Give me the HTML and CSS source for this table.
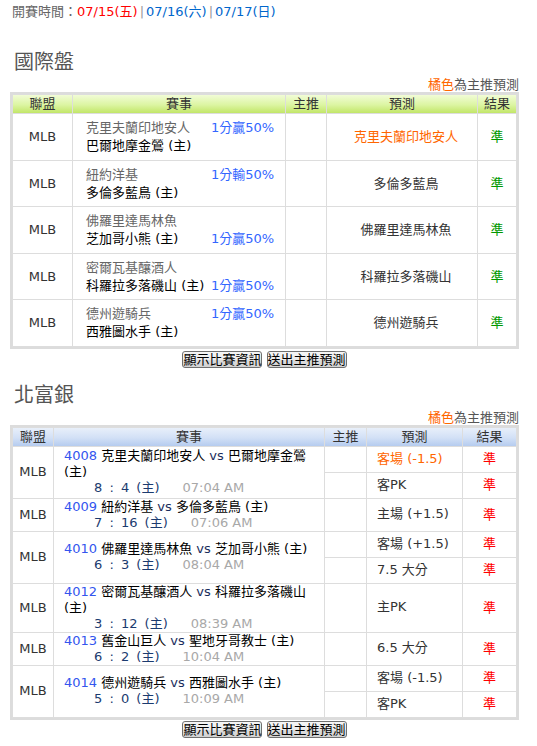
FILE: index.html
```html
<!DOCTYPE html>
<html lang="zh-Hant">
<head>
<meta charset="utf-8">
<title>開賽時間</title>
<link rel="stylesheet" href="styles.css">
</head>
<body>
<div class="page">
  <div class="dates">開賽時間：<span class="cur">07/15(五)</span><span class="sep">|</span><span class="day">07/16(六)</span><span class="sep">|</span><span class="day">07/17(日)</span></div>

  <h2 class="title first">國際盤</h2>
  <div class="note"><span class="orange">橘色</span>為主推預測</div>
  <div class="box">
    <table class="grid g1">
      <thead>
        <tr><th class="w1">聯盟</th><th class="w2">賽事</th><th class="w3">主推</th><th class="w4">預測</th><th class="w5">結果</th></tr>
      </thead>
      <tbody>
        <tr>
          <td class="lg">MLB</td>
          <td class="match"><div class="mt"><span class="away">克里夫蘭印地安人</span><span class="odds">1分贏50%</span><span class="home">巴爾地摩金鶯 (主)</span><span></span></div></td>
          <td></td>
          <td class="pred hot">克里夫蘭印地安人</td>
          <td class="res ok">準</td>
        </tr>
        <tr>
          <td class="lg">MLB</td>
          <td class="match"><div class="mt"><span class="away">紐約洋基</span><span class="odds">1分輸50%</span><span class="home">多倫多藍鳥 (主)</span><span></span></div></td>
          <td></td>
          <td class="pred">多倫多藍鳥</td>
          <td class="res ok">準</td>
        </tr>
        <tr>
          <td class="lg">MLB</td>
          <td class="match"><div class="mt"><span class="away">佛羅里達馬林魚</span><span></span><span class="home">芝加哥小熊 (主)</span><span class="odds">1分贏50%</span></div></td>
          <td></td>
          <td class="pred">佛羅里達馬林魚</td>
          <td class="res ok">準</td>
        </tr>
        <tr>
          <td class="lg">MLB</td>
          <td class="match"><div class="mt"><span class="away">密爾瓦基釀酒人</span><span></span><span class="home">科羅拉多落磯山 (主)</span><span class="odds">1分贏50%</span></div></td>
          <td></td>
          <td class="pred">科羅拉多落磯山</td>
          <td class="res ok">準</td>
        </tr>
        <tr>
          <td class="lg">MLB</td>
          <td class="match"><div class="mt"><span class="away">德州遊騎兵</span><span class="odds">1分贏50%</span><span class="home">西雅圖水手 (主)</span><span></span></div></td>
          <td></td>
          <td class="pred">德州遊騎兵</td>
          <td class="res ok">準</td>
        </tr>
      </tbody>
    </table>
  </div>
  <div class="btns"><button class="btn">顯示比賽資訊</button> <button class="btn">送出主推預測</button></div>

  <h2 class="title second">北富銀</h2>
  <div class="note"><span class="orange">橘色</span>為主推預測</div>
  <div class="box">
    <table class="grid g2">
      <thead>
        <tr><th class="v1">聯盟</th><th class="v2">賽事</th><th class="v3">主推</th><th class="v4">預測</th><th class="v5">結果</th></tr>
      </thead>
      <tbody>
        <tr>
          <td class="lg" rowspan="2">MLB</td>
          <td class="game" rowspan="2"><span class="no">4008</span> 克里夫蘭印地安人 <span class="vs">vs</span> 巴爾地摩金鶯 (主)<div class="score"><span class="sc">8 : 4 (主)</span><span class="time">07:04 AM</span></div></td>
          <td></td>
          <td class="pick hot">客場 (-1.5)</td>
          <td class="res bad">準</td>
        </tr>
        <tr>
          <td></td>
          <td class="pick">客PK</td>
          <td class="res bad">準</td>
        </tr>
        <tr>
          <td class="lg">MLB</td>
          <td class="game"><span class="no">4009</span> 紐約洋基 <span class="vs">vs</span> 多倫多藍鳥 (主)<div class="score"><span class="sc">7 : 16 (主)</span><span class="time">07:06 AM</span></div></td>
          <td></td>
          <td class="pick">主場 (+1.5)</td>
          <td class="res bad">準</td>
        </tr>
        <tr>
          <td class="lg" rowspan="2">MLB</td>
          <td class="game" rowspan="2"><span class="no">4010</span> 佛羅里達馬林魚 <span class="vs">vs</span> 芝加哥小熊 (主)<div class="score"><span class="sc">6 : 3 (主)</span><span class="time">08:04 AM</span></div></td>
          <td></td>
          <td class="pick">客場 (+1.5)</td>
          <td class="res bad">準</td>
        </tr>
        <tr>
          <td></td>
          <td class="pick">7.5 大分</td>
          <td class="res bad">準</td>
        </tr>
        <tr>
          <td class="lg">MLB</td>
          <td class="game"><span class="no">4012</span> 密爾瓦基釀酒人 <span class="vs">vs</span> 科羅拉多落磯山 (主)<div class="score"><span class="sc">3 : 12 (主)</span><span class="time">08:39 AM</span></div></td>
          <td></td>
          <td class="pick">主PK</td>
          <td class="res bad">準</td>
        </tr>
        <tr>
          <td class="lg">MLB</td>
          <td class="game"><span class="no">4013</span> 舊金山巨人 <span class="vs">vs</span> 聖地牙哥教士 (主)<div class="score"><span class="sc">6 : 2 (主)</span><span class="time">10:04 AM</span></div></td>
          <td></td>
          <td class="pick">6.5 大分</td>
          <td class="res bad">準</td>
        </tr>
        <tr>
          <td class="lg" rowspan="2">MLB</td>
          <td class="game" rowspan="2"><span class="no">4014</span> 德州遊騎兵 <span class="vs">vs</span> 西雅圖水手 (主)<div class="score"><span class="sc">5 : 0 (主)</span><span class="time">10:09 AM</span></div></td>
          <td></td>
          <td class="pick">客場 (-1.5)</td>
          <td class="res bad">準</td>
        </tr>
        <tr>
          <td></td>
          <td class="pick">客PK</td>
          <td class="res bad">準</td>
        </tr>
      </tbody>
    </table>
  </div>
  <div class="btns second-btns"><button class="btn">顯示比賽資訊</button> <button class="btn">送出主推預測</button></div>
</div>
</body>
</html>
```

FILE: styles.css
```css
* { box-sizing: border-box; }

html, body {
  margin: 0;
  padding: 0;
  background: #fff;
}

body {
  font-family: "DejaVu Sans", "Noto Sans CJK TC", sans-serif;
  font-size: 13px;
  color: #333;
}

.page {
  width: 509px;
  margin-left: 10px;
  padding-top: 3px;
}

/* date line */
.dates {
  line-height: 18px;
  padding-left: 2px;
  color: #666;
}
.dates .cur { color: #ff0000; }
.dates .day { color: #0066cc; }
.dates .sep { color: #999; margin: 0 2px; }

/* section titles */
.title {
  font-size: 20px;
  font-weight: normal;
  color: #555;
  line-height: 24px;
  margin: 0;
  padding-left: 4px;
}
.title.first { margin-top: 29px; }
.title.second { margin-top: 15px; }

.note {
  margin-top: 4px;
  line-height: 14px;
  text-align: right;
  color: #555;
}
.orange { color: #ff6600; }

/* table frame */
.box {
  border: 2px solid #dcdcdc;
}

.grid {
  width: 100%;
  table-layout: fixed;
  border-collapse: separate;
  border-spacing: 0;
}

.grid th,
.grid td {
  border-right: 1px solid #dddddd;
  border-bottom: 1px solid #dddddd;
  padding: 0;
}
.grid th:first-child,
.grid td.lg {
  border-left: 1px solid #dddddd;
}
.grid th {
  border-top: 1px solid #dddddd;
  font-weight: normal;
  color: #333;
  height: 20px;
  line-height: 18px;
  text-align: center;
}

.g1 th { background: linear-gradient(#f1fcd6, #dcf5a2 55%, #c2e668); }
.g2 th { background: linear-gradient(#e8effa, #d2e0f6 55%, #b5ccef); }

.g1 .w1 { width: 61px; }
.g1 .w2 { width: 213px; }
.g1 .w3 { width: 41px; }
.g1 .w4 { width: 151px; }
.g1 .w5 { width: 39px; }

.g2 .v1 { width: 42px; }
.g2 .v2 { width: 271px; }
.g2 .v3 { width: 42px; }
.g2 .v4 { width: 96px; }
.g2 .v5 { width: 54px; }

.lg {
  text-align: center;
  vertical-align: middle;
  color: #333;
}

/* table 1 cells */
.g1 td {
  line-height: 18px;
  padding-top: 5px;
  padding-bottom: 4.6px;
}
.g1 td.match {
  padding-left: 13px;
}
.mt {
  display: grid;
  grid-template-columns: 125px auto;
}
.away { color: #666; }
.home { color: #000; }
.odds { color: #3366ff; }

.pred {
  text-align: center;
  padding-left: 8px !important;
  color: #333;
}
.hot { color: #ff6600; }

.res { text-align: center; }
.ok { color: #009900; }
.bad { color: #ff0000; }

/* table 2 cells */
.g2 td {
  line-height: 16px;
  vertical-align: middle;
}
.g2 td.game {
  padding: 0 4px 0 10px;
  color: #000;
}
.no { color: #3355ee; }
.vs { color: #1a2c5c; }
.score {
  padding-left: 30px;
}
.sc { color: #1b3b6f; word-spacing: 3px; }
.time { color: #a8a8a8; margin-left: 23px; }

.pick {
  padding: 4px 0 5px 10px !important;
  color: #333;
}
.pick.hot { color: #ff6600; }

/* buttons */
.btns {
  margin-top: 2px;
  text-align: center;
  line-height: 17px;
  height: 17px;
}
.second-btns { margin-top: 1px; }
.btn {
  vertical-align: top;
  font-family: "DejaVu Sans", "Noto Sans CJK TC", sans-serif;
  font-size: 13px;
  line-height: 15px;
  height: 17px;
  padding: 0;
  margin: 0;
  color: #000;
  border: 1px solid #707070;
  border-radius: 3px;
  background: linear-gradient(#f6f6f6, #ececec 50%, #dedede 51%, #d2d2d2);
}
```
